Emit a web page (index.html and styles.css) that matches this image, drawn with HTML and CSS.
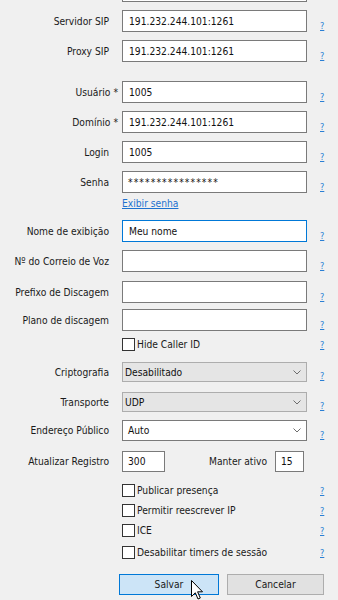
FILE: index.html
```html
<!DOCTYPE html>
<html lang="pt-BR">
<head>
<meta charset="utf-8">
<title>Conta SIP</title>
<link rel="stylesheet" href="styles.css">
</head>
<body>
<div class="form">
  <div class="row r-top"><span class="label"></span><div class="box"></div><span></span></div>
  <div class="row mt8"><span class="label">Servidor SIP</span><div class="box">191.232.244.101:1261</div><a class="help">?</a></div>
  <div class="row mt8"><span class="label">Proxy SIP</span><div class="box">191.232.244.101:1261</div><a class="help">?</a></div>
  <div class="row mt19"><span class="label req">Usuário<span class="star">*</span></span><div class="box">1005</div><a class="help">?</a></div>
  <div class="row mt8"><span class="label req">Domínio<span class="star">*</span></span><div class="box">191.232.244.101:1261</div><a class="help">?</a></div>
  <div class="row mt8"><span class="label">Login</span><div class="box">1005</div><a class="help">?</a></div>
  <div class="row mt8"><span class="label">Senha</span><div class="box pass">****************</div><a class="help">?</a></div>
  <div class="row link-row"><span></span><a class="link">Exibir senha</a><span></span></div>
  <div class="row mt10"><span class="label">Nome de exibição</span><div class="box focus">Meu nome</div><a class="help">?</a></div>
  <div class="row mt8"><span class="label">Nº do Correio de Voz</span><div class="box"></div><a class="help">?</a></div>
  <div class="row mt9"><span class="label">Prefixo de Discagem</span><div class="box"></div><a class="help">?</a></div>
  <div class="row mt6"><span class="label">Plano de discagem</span><div class="box"></div><a class="help">?</a></div>
  <div class="row check-row mt7"><span></span><div class="check-field"><span class="check"></span><span>Hide Caller ID</span></div><a class="help">?</a></div>
  <div class="row sel-row mt11"><span class="label">Criptografia</span><div class="select">Desabilitado<svg class="chev" width="8" height="5" viewBox="0 0 8 5"><polyline points="0.5,0.5 4,4 7.5,0.5" fill="none" stroke="#6d6d6d" stroke-width="1"/></svg></div><a class="help">?</a></div>
  <div class="row sel-row mt10"><span class="label">Transporte</span><div class="select">UDP<svg class="chev" width="8" height="5" viewBox="0 0 8 5"><polyline points="0.5,0.5 4,4 7.5,0.5" fill="none" stroke="#6d6d6d" stroke-width="1"/></svg></div><a class="help">?</a></div>
  <div class="row sel-row tall mt8"><span class="label">Endereço Público</span><div class="select edit">Auto<svg class="chev" width="8" height="5" viewBox="0 0 8 5"><polyline points="0.5,0.5 4,4 7.5,0.5" fill="none" stroke="#6d6d6d" stroke-width="1"/></svg></div><a class="help">?</a></div>
  <div class="row tall mt10"><span class="label">Atualizar Registro</span><div class="pair"><div class="box num1">300</div><span class="manter">Manter ativo</span><div class="box num2">15</div></div><span></span></div>
  <div class="row check-row mt12"><span></span><div class="check-field"><span class="check"></span><span>Publicar presença</span></div><a class="help">?</a></div>
  <div class="row check-row mt7"><span></span><div class="check-field"><span class="check"></span><span>Permitir reescrever IP</span></div><a class="help">?</a></div>
  <div class="row check-row mt7"><span></span><div class="check-field"><span class="check"></span><span>ICE</span></div><a class="help">?</a></div>
  <div class="row check-row mt9"><span></span><div class="check-field"><span class="check"></span><span>Desabilitar timers de sessão</span></div><a class="help">?</a></div>
  <div class="buttons">
    <div class="btn primary">Salvar
      <svg class="cursor" width="13" height="20" viewBox="0 0 13 20"><path d="M0.5,0.5 L0.5,16.5 L4.3,12.8 L7,19 L9.3,18 L6.6,11.8 L11.5,11.8 Z" fill="#fff" stroke="#000" stroke-width="1" stroke-linejoin="round"/></svg>
    </div>
    <div class="btn">Cancelar</div>
  </div>
</div>
</body>
</html>
```
FILE: styles.css
```css
html, body {
  margin: 0;
  padding: 0;
}
body {
  background: #f0f0f0;
  color: #1a1a1a;
  font-family: "DejaVu Sans Condensed", "DejaVu Sans", sans-serif;
  font-stretch: condensed;
  font-size: 10.2px;
  height: 600px;
  overflow: hidden;
}
.form {
  display: flex;
  flex-direction: column;
  margin-top: -20px;
}
.row {
  display: grid;
  grid-template-columns: 122px 185px 1fr;
  align-items: center;
  height: 22px;
}
.mt6 { margin-top: 6px; }
.mt7 { margin-top: 7px; }
.mt8 { margin-top: 8px; }
.mt9 { margin-top: 9px; }
.mt10 { margin-top: 10px; }
.mt11 { margin-top: 11px; }
.mt12 { margin-top: 12px; }
.mt19 { margin-top: 19px; }

.label {
  text-align: right;
  padding-right: 13px;
  white-space: nowrap;
}
.label.req {
  padding-right: 4px;
}
.star {
  margin-left: 3px;
}
.box {
  height: 22px;
  box-sizing: border-box;
  border: 1px solid #7a7a7a;
  background: #fff;
  padding-left: 6px;
  display: flex;
  align-items: center;
  white-space: nowrap;
  color: #111;
}
.box.pass {
  letter-spacing: 1.1px;
  padding-left: 5px;
}
.box.focus {
  border-color: #0078d7;
}
.help {
  align-self: end;
  padding-left: 13px;
  padding-bottom: 1px;
  color: #2a7fd4;
  text-decoration: underline;
  font-size: 9px;
  line-height: 10px;
}
.link-row {
  height: 14px;
  margin-top: 3px;
}
.link {
  color: #1d72cf;
  text-decoration: underline;
}
.check-row {
  height: 13px;
}
.check-field {
  display: flex;
  align-items: center;
  white-space: nowrap;
}
.check {
  width: 13px;
  height: 13px;
  box-sizing: border-box;
  border: 1px solid #333;
  background: #fff;
  margin-right: 2px;
  flex: none;
}
.sel-row {
  height: 20px;
}
.sel-row.tall, .row.tall {
  height: 21px;
}
.select {
  height: 100%;
  box-sizing: border-box;
  border: 1px solid #adadad;
  background: #e5e5e5;
  padding-left: 2px;
  padding-right: 5px;
  display: flex;
  align-items: center;
  justify-content: space-between;
  color: #111;
}
.select.edit {
  background: #fff;
  border-color: #7a7a7a;
  padding-left: 5px;
}
.chev {
  flex: none;
}
.pair {
  display: flex;
  align-items: center;
  height: 21px;
  padding-right: 3px;
}
.pair .box {
  height: 21px;
  padding-left: 5px;
}
.num1 {
  width: 43px;
}
.manter {
  margin-left: auto;
  margin-right: 8px;
}
.num2 {
  width: 29px;
}
.buttons {
  display: flex;
  gap: 8px;
  padding-left: 119px;
  margin-top: 15px;
}
.btn {
  position: relative;
  height: 21px;
  width: 97px;
  box-sizing: border-box;
  border: 1px solid #adadad;
  background: #e1e1e1;
  display: flex;
  align-items: center;
  justify-content: center;
}
.btn.primary {
  width: 100px;
  border-color: #0078d7;
  background: #cce4f7;
}
.cursor {
  position: absolute;
  left: 71px;
  top: 5px;
}
```
